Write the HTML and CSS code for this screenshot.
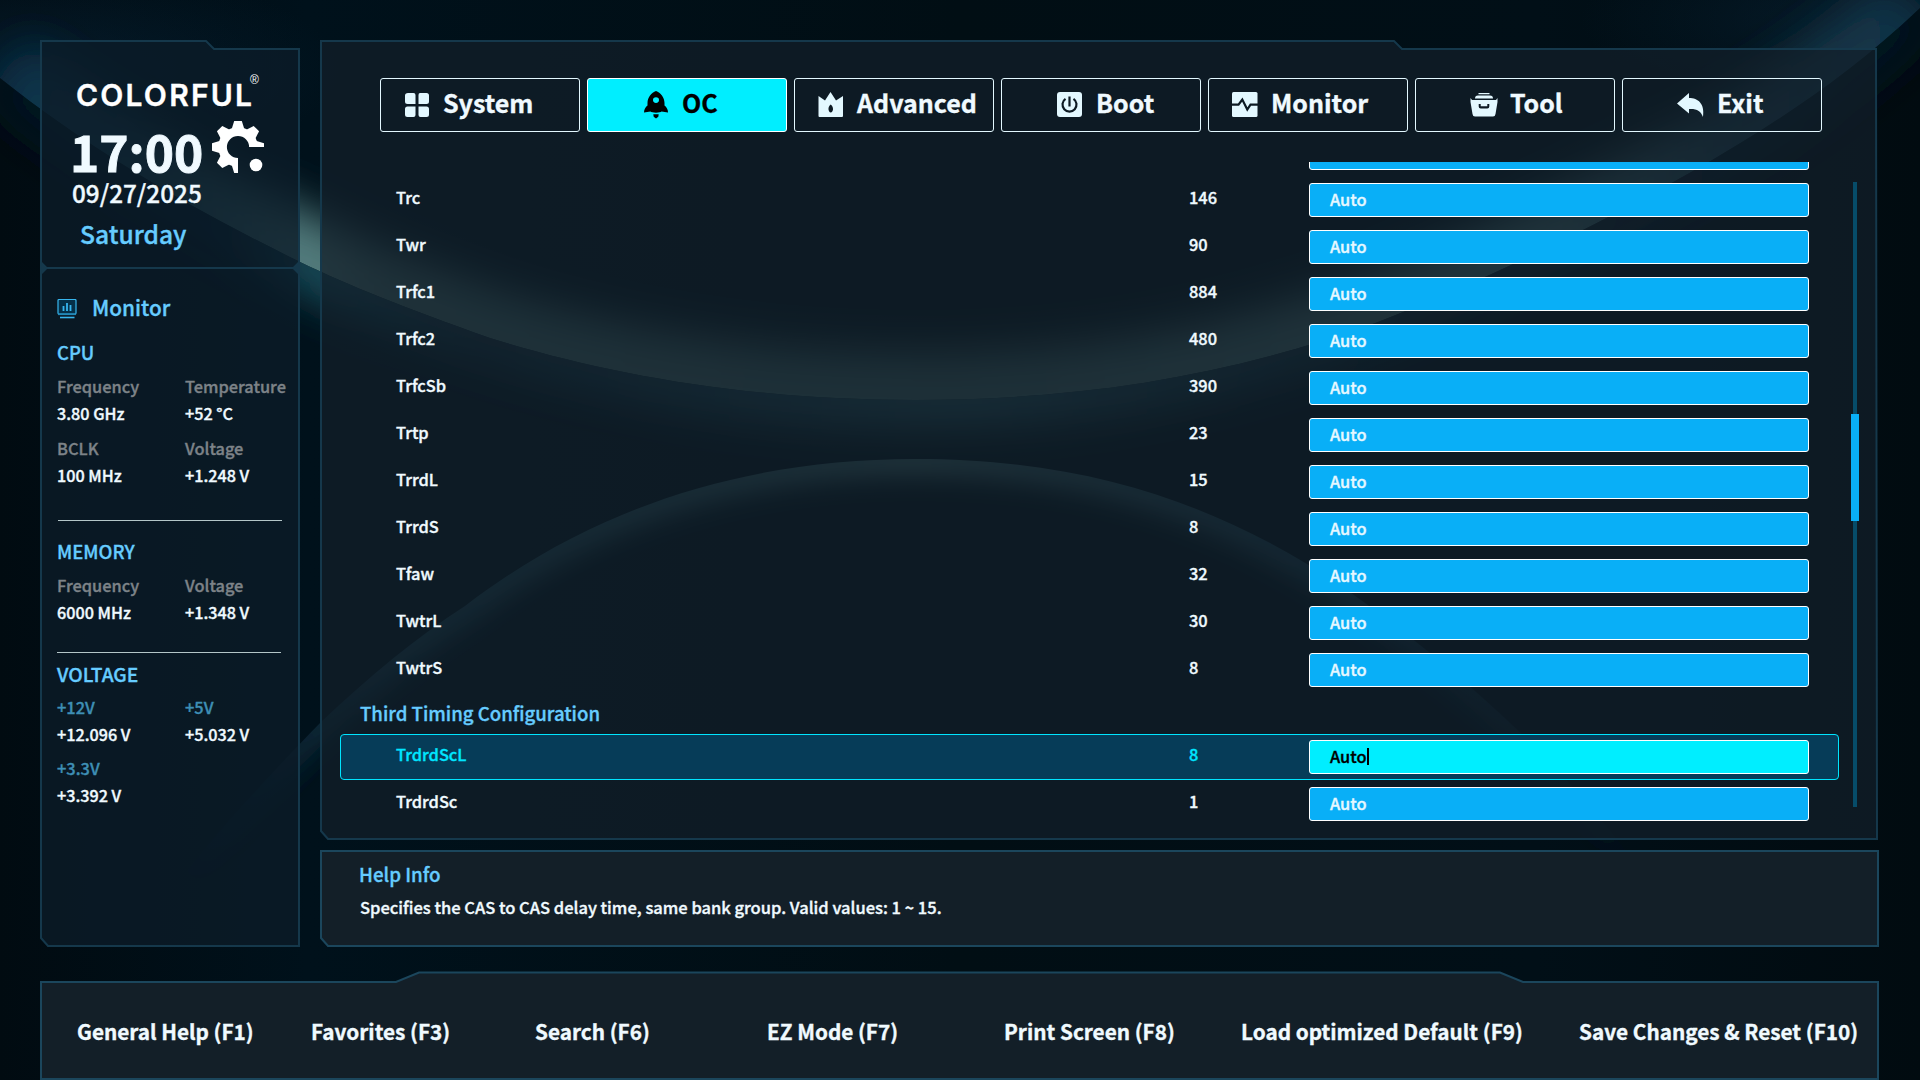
FILE: index.html
```html
<!DOCTYPE html>
<html lang="en">
<head>
  <meta charset="UTF-8" />
  <meta name="viewport" content="width=device-width, initial-scale=1.0"/>
  <title>COLORFUL BIOS - OC</title>
  <link rel="stylesheet" href="styles.css">
</head>
<body>

<!-- background arcs -->
<svg class="backdrop" viewBox="0 0 1920 1080" aria-hidden="true">
  <defs>
    <clipPath id="aboveArc"><path d="M0 0H1920V8C1850 75 1780 120 1709 162C1600 224 1500 274 1378 322C1230 376 1080 400 915 400C740 400 600 372 490 338C400 306 350 286 300 262C190 208 90 150 0 78Z"/></clipPath>
    <clipPath id="belowArc"><path d="M0 78C90 150 190 208 300 262C350 286 400 306 490 338C600 372 740 400 915 400C1080 400 1230 376 1378 322C1500 274 1600 224 1709 162C1780 120 1850 75 1920 8V1080H0Z"/></clipPath>
    <clipPath id="lowerArc"><path d="M150 920C200 850 250 795 321 722C370 676 415 638 465 606C590 510 740 459 915 459C1090 459 1220 505 1340 585C1460 670 1560 760 1640 870L1640 1080H150Z"/></clipPath>
    <linearGradient id="band" gradientUnits="userSpaceOnUse" x1="0" y1="0" x2="1920" y2="0">
      <stop offset="0" stop-color="#0c3049"/>
      <stop offset="0.07" stop-color="#1b4252"/>
      <stop offset="0.16" stop-color="#568080"/>
      <stop offset="0.2" stop-color="#466868"/>
      <stop offset="0.5" stop-color="#426262"/>
      <stop offset="0.8" stop-color="#4c7070"/>
      <stop offset="0.9" stop-color="#1f3f4e"/>
      <stop offset="1" stop-color="#0e3044"/>
    </linearGradient>
    <linearGradient id="under" gradientUnits="userSpaceOnUse" x1="0" y1="0" x2="1920" y2="0">
      <stop offset="0" stop-color="#021420"/>
      <stop offset="0.12" stop-color="#06202e"/>
      <stop offset="0.165" stop-color="#1c5563"/>
      <stop offset="0.25" stop-color="#12303f"/>
      <stop offset="0.5" stop-color="#2c5c66"/>
      <stop offset="0.75" stop-color="#0c2533"/>
      <stop offset="1" stop-color="#021622"/>
    </linearGradient>
    <linearGradient id="lower" gradientUnits="userSpaceOnUse" x1="180" y1="0" x2="1640" y2="0">
      <stop offset="0" stop-color="#0a2a40" stop-opacity="0"/>
      <stop offset="0.15" stop-color="#183f4e"/>
      <stop offset="0.5" stop-color="#4a6f70"/>
      <stop offset="0.8" stop-color="#1a3b4c"/>
      <stop offset="1" stop-color="#0a2a40" stop-opacity="0"/>
    </linearGradient>
    <linearGradient id="base" x1="0" y1="0" x2="1" y2="0">
      <stop offset="0" stop-color="#010b11"/>
      <stop offset="0.16" stop-color="#00111b"/>
      <stop offset="0.5" stop-color="#010e14"/>
      <stop offset="0.8" stop-color="#010f17"/>
      <stop offset="1" stop-color="#010b10"/>
    </linearGradient>
    <radialGradient id="corner"><stop offset="0" stop-color="#08263c" stop-opacity="0.6"/><stop offset="1" stop-color="#08263c" stop-opacity="0"/></radialGradient>
    <filter id="glow" x="-20%" y="-50%" width="140%" height="200%"><feGaussianBlur stdDeviation="22"/></filter>
    <filter id="soft" x="-20%" y="-50%" width="140%" height="200%"><feGaussianBlur stdDeviation="13"/></filter>
  </defs>
  <rect width="1920" height="1080" fill="url(#base)"/>
  <g clip-path="url(#aboveArc)">
    <ellipse cx="20" cy="70" rx="320" ry="110" fill="url(#corner)"/>
    <ellipse cx="1880" cy="20" rx="300" ry="90" fill="url(#corner)"/>
    <path d="M0 78C90 150 190 208 300 262C350 286 400 306 490 338C600 372 740 400 915 400C1080 400 1230 376 1378 322C1500 274 1600 224 1709 162C1780 120 1850 75 1920 8" fill="none" stroke="url(#band)" stroke-width="94" filter="url(#glow)"/>
  </g>
  <g clip-path="url(#belowArc)">
    <path d="M0 78C90 150 190 208 300 262C350 286 400 306 490 338C600 372 740 400 915 400C1080 400 1230 376 1378 322C1500 274 1600 224 1709 162C1780 120 1850 75 1920 8" fill="none" stroke="url(#under)" stroke-width="50" filter="url(#glow)"/>
  </g>
  <g clip-path="url(#lowerArc)">
    <path d="M150 920C200 850 250 795 321 722C370 676 415 638 465 606C590 510 740 459 915 459C1090 459 1220 505 1340 585C1460 670 1560 760 1640 870" fill="none" stroke="url(#lower)" stroke-width="32" filter="url(#soft)"/>
  </g>
</svg>

<div class="screen">

  <aside class="sidebar">
    <svg class="frame" viewBox="0 0 260 907">
      <path class="frame-fill" d="M1 1H166L174 9H259V906H8L1 898Z"/>
      <path class="frame-line" d="M1 1H166L174 9H259V906H8L1 898ZM1 228H259"/>
      <path class="frame-knot" d="M2 222L8 228L2 234ZM258 222L252 228L258 234Z"/>
    </svg>

    <div class="clock">
      <div class="logo">COLORFUL<span class="reg">®</span></div>
      <div class="time-row">
        <span class="time">17:00</span>
        <svg class="gear" viewBox="0 0 52 52">
          <defs>
            <path id="tooth" d="M-6.6 -17L-3.8 -26H3.8L6.6 -17Z"/>
            <clipPath id="gearClip"><path d="M0 0H52V26H26V52H0Z"/></clipPath>
          </defs>
          <g clip-path="url(#gearClip)">
            <g transform="translate(26 26)">
              <circle r="15.4" fill="none" stroke="#fff" stroke-width="8.6"/>
              <use href="#tooth"/>
              <use href="#tooth" transform="rotate(45)"/>
              <use href="#tooth" transform="rotate(90)"/>
              <use href="#tooth" transform="rotate(180)"/>
              <use href="#tooth" transform="rotate(225)"/>
              <use href="#tooth" transform="rotate(270)"/>
              <use href="#tooth" transform="rotate(315)"/>
            </g>
          </g>
          <circle cx="44" cy="44" r="6.3"/>
        </svg>
      </div>
      <div class="date">09/27/2025</div>
      <div class="day">Saturday</div>
    </div>

    <div class="monitor">
      <div class="monitor-title">
        <svg viewBox="0 0 20 20">
          <rect x="1" y="0.500" width="18" height="14.500" rx="1" fill="#053048" stroke="#37b6ee" stroke-width="1.2"/>
          <path d="M6.500 7V12M10 4V12M13.500 6V12" stroke="#37b6ee" stroke-width="1.8"/>
          <path d="M1 15.300H19" stroke="#2289b8" stroke-width="1.600"/>
          <path d="M3 18.500H17.500" stroke="#37b6ee" stroke-width="1.600"/>
        </svg>
        <span>Monitor</span>
      </div>

      <h3>CPU</h3>
      <div class="stats">
        <div><label>Frequency</label><b>3.80 GHz</b></div>
        <div><label>Temperature</label><b>+52 °C</b></div>
        <div><label>BCLK</label><b>100 MHz</b></div>
        <div><label>Voltage</label><b>+1.248 V</b></div>
      </div>
      <hr class="line-cpu">

      <h3>MEMORY</h3>
      <div class="stats">
        <div><label>Frequency</label><b>6000 MHz</b></div>
        <div><label>Voltage</label><b>+1.348 V</b></div>
      </div>
      <hr class="line-mem">

      <h3 class="volt-title">VOLTAGE</h3>
      <div class="stats volts">
        <div><label>+12V</label><b>+12.096 V</b></div>
        <div><label>+5V</label><b>+5.032 V</b></div>
        <div><label>+3.3V</label><b>+3.392 V</b></div>
      </div>
    </div>
  </aside>

  <main class="main">
    <svg class="frame" viewBox="0 0 1558 800">
      <path class="frame-fill" d="M1 1H1074L1082 9H1556L1557 799H8L1 791Z"/>
      <path class="frame-line" d="M1 1H1074L1082 9H1556L1557 799H8L1 791Z"/>
    </svg>

    <nav>
      <a class="tab">
        <svg viewBox="0 0 26 28"><path d="M4 2H9.500Q11.500 2 11.500 4V13H3.500Q1 13 1 10.500V4.500Q1 2 4 2ZM16 2H22.500Q25 2 25 4.500V10.500Q25 13 22.500 13H14.500V4Q14.500 2 16 2ZM3.500 15.500H11.500V24Q11.500 26 9.500 26H3.500Q1 26 1 23.500V18Q1 15.500 3.500 15.500ZM14.500 15.500H22.500Q25 15.500 25 18V23.500Q25 26 22.500 26H16.500Q14.500 26 14.500 24Z"/></svg>
        <span>System</span>
      </a>
      <a class="tab wide active">
        <svg viewBox="0 0 26 28"><path fill-rule="evenodd" d="M13 0C17.500 1.500 21.500 6.500 21.500 12V14.500C23.500 16 25 18.500 25 21.500L18.500 20.500C17.500 22 8.500 22 7.500 20.500L1 21.500C1 18.500 2.500 16 4.500 14.500V12C4.500 6.500 8.500 1.500 13 0ZM13 6.300A3 2.800 0 1 0 13 11.900A3 2.800 0 1 0 13 6.300ZM10.300 23.300H15.700L15.300 25.800L13 27.500L10.700 25.800Z"/></svg>
        <span>OC</span>
      </a>
      <a class="tab">
        <svg viewBox="0 0 26 28"><path fill-rule="evenodd" d="M0.500 5L7 9.500L12.500 1L18 9.500L25 5V25Q25 26 24 26H1.500Q0.500 26 0.500 25ZM12.700 13.500C11.100 14.500 10.300 16.500 10.500 18.500C10.700 20 11.500 21.300 12.700 21.600C14 21.300 14.800 20 15 18.500C15.200 16.500 14.300 14.500 12.700 13.500Z"/></svg>
        <span>Advanced</span>
      </a>
      <a class="tab wide">
        <svg viewBox="0 0 26 28"><rect x="0" y="1" width="25" height="25" rx="3"/><path class="cut" d="M8.500 7.800A7 7 0 1 0 16.500 7.800M12.500 5.500V15.500"/></svg>
        <span>Boot</span>
      </a>
      <a class="tab">
        <svg viewBox="0 0 26 28"><rect x="0" y="1" width="25.500" height="25" rx="1.500"/><path class="cut" d="M0 13.700H6.500L10.300 8.500L15.300 18.500L18.500 13.700H26"/></svg>
        <span>Monitor</span>
      </a>
      <a class="tab wide">
        <svg viewBox="0 0 26 28"><path fill-rule="evenodd" d="M7.500 2H18.500V3.300H7.500ZM4 7.500Q4 4.500 7 4.500H19Q22 4.500 22 7.500ZM-0.500 7L1 9H25L26.500 7V11L24.500 23Q24.200 25.500 22 25.500H4Q1.800 25.500 1.500 23L-0.500 11ZM7.700 13V15.500Q7.700 17.500 9.700 17.500H16.300Q18.300 17.500 18.300 15.500V13H16.300V15.300H9.700V13Z"/></svg>
        <span>Tool</span>
      </a>
      <a class="tab wide">
        <svg viewBox="0 0 26 28"><path d="M-1 12.500L11 2V7C20 7 27 12.500 25 26C23 20 18.500 17.500 11 18V22.500Z"/></svg>
        <span>Exit</span>
      </a>
    </nav>

    <div class="viewport">
      <div class="list">
        <div class="row"><span></span><span></span><div class="field"></div></div>
        <div class="row"><span>Trc</span><span>146</span><div class="field">Auto</div></div>
        <div class="row"><span>Twr</span><span>90</span><div class="field">Auto</div></div>
        <div class="row"><span>Trfc1</span><span>884</span><div class="field">Auto</div></div>
        <div class="row"><span>Trfc2</span><span>480</span><div class="field">Auto</div></div>
        <div class="row"><span>TrfcSb</span><span>390</span><div class="field">Auto</div></div>
        <div class="row"><span>Trtp</span><span>23</span><div class="field">Auto</div></div>
        <div class="row"><span>TrrdL</span><span>15</span><div class="field">Auto</div></div>
        <div class="row"><span>TrrdS</span><span>8</span><div class="field">Auto</div></div>
        <div class="row"><span>Tfaw</span><span>32</span><div class="field">Auto</div></div>
        <div class="row"><span>TwtrL</span><span>30</span><div class="field">Auto</div></div>
        <div class="row"><span>TwtrS</span><span>8</span><div class="field">Auto</div></div>
        <h2 class="group">Third Timing Configuration</h2>
        <div class="row selected"><span>TrdrdScL</span><span>8</span><div class="field">Auto<i class="caret"></i></div></div>
        <div class="row"><span>TrdrdSc</span><span>1</span><div class="field">Auto</div></div>
      </div>
      <div class="scrollbar"><div class="thumb"></div></div>
    </div>
  </main>

  <section class="help">
    <svg class="frame" viewBox="0 0 1559 97">
      <path class="frame-fill solid" d="M1 1H1558V96H8L1 88Z"/>
      <path class="frame-line bright" d="M1 1H1558V96H8L1 88Z"/>
    </svg>
    <h2>Help Info</h2>
    <p>Specifies the CAS to CAS delay time, same bank group. Valid values: 1 ~ 15.</p>
  </section>

  <footer>
    <svg class="frame" viewBox="0 0 1839 108">
      <path class="frame-fill solid" d="M1 10H356L379 0H1460L1483 10H1838V107H1Z"/>
      <path class="frame-line bright" d="M1 10H356L379 0.500H1460L1483 10H1838V107H1Z"/>
    </svg>
    <span>General Help (F1)</span>
    <span>Favorites (F3)</span>
    <span>Search (F6)</span>
    <span>EZ Mode (F7)</span>
    <span>Print Screen (F8)</span>
    <span>Load optimized Default (F9)</span>
    <span>Save Changes &amp; Reset (F10)</span>
  </footer>

</div>

</body>
</html>
```
FILE: styles.css
```css
* {
  box-sizing: border-box;
}

body {
  margin: 0;
  width: 1920px;
  height: 1080px;
  overflow: hidden;
  position: relative;
  background: #010d13;
  color: #f0faff;
  font-family: "Noto Sans CJK SC", "Noto Sans", sans-serif;
  font-size: 16.4px;
  font-weight: 500;
  -webkit-text-stroke: 0.35px;
}

h2, h3, p {
  margin: 0;
  font-weight: 500;
}

.backdrop {
  position: absolute;
  top: 0;
  left: 0;
  width: 1920px;
  height: 1080px;
}

.screen {
  position: relative;
  display: grid;
  grid-template-columns: 260px 1558px;
  grid-template-rows: 800px 97px 108px;
  column-gap: 20px;
  padding: 40px 0 0 40px;
}

/* panel outlines sit behind the panel content */
.frame {
  position: absolute;
  top: 0;
  left: 0;
  width: 100%;
  height: 100%;
  z-index: -1;
  overflow: visible;
}

.frame-fill {
  fill: rgba(17, 31, 42, 0.75);
}

.frame-fill.solid {
  fill: #131f28;
}

.frame-line {
  fill: none;
  stroke: #15384b;
  stroke-width: 2;
}

.frame-line.bright {
  stroke: #1b465c;
}

.frame-knot {
  fill: #15384b;
}

/* sidebar */
.sidebar {
  position: relative;
  z-index: 0;
  grid-row: 1 / 3;
  height: 907px;
}

.sidebar .frame-fill {
  fill: rgba(11, 28, 40, 0.8);
}

.clock {
  height: 228px;
  padding: 40px 0 0 32px;
}

.logo {
  position: relative;
  width: 190px;
  height: 30px;
  margin-left: 4px;
  font: 600 30px/30px Inter, sans-serif;
  letter-spacing: 2.2px;
  color: #fff;
}

.reg {
  position: absolute;
  left: 174px;
  top: -6px;
  font: 12px/12px "Liberation Sans", sans-serif;
  letter-spacing: 0;
  -webkit-text-stroke: 0;
}

.time-row {
  display: flex;
  gap: 9px;
  height: 67px;
  padding-top: 11px;
}

.time {
  width: 131px;
  margin: 4px 0 0 -2px;
  font-size: 49.6px;
  line-height: 50px;
  font-weight: 700;
  white-space: nowrap;
  -webkit-text-stroke: 0.9px;
}

.gear {
  width: 52px;
  height: 52px;
  margin-left: 2px;
  fill: #fff;
}

.date {
  font-size: 24.3px;
  line-height: 31px;
}

.day {
  margin-top: 7px;
  padding-left: 8px;
  font-size: 24.6px;
  line-height: 36px;
  color: #66ccff;
}

.monitor {
  padding: 24px 0 0 17px;
}

.monitor-title {
  display: flex;
  gap: 15px;
  height: 30px;
  margin-bottom: 17px;
  font-size: 20.8px;
  line-height: 31px;
  color: #66ccff;
}

.monitor-title svg {
  width: 20px;
  height: 20px;
  margin-top: 7px;
}

.monitor h3 {
  font-size: 18.4px;
  line-height: 27px;
  color: #66ccff;
}

.monitor .volt-title {
  font-size: 19.2px;
}

.stats {
  display: grid;
  grid-template-columns: 128px 110px;
  row-gap: 8px;
  margin-top: 7px;
  font-size: 16.2px;
  line-height: 27px;
}

.stats label,
.stats b {
  display: block;
  font-weight: 500;
  white-space: nowrap;
}

.stats label {
  color: #7d8388;
  font-size: 16.4px;
}

.stats.volts {
  row-gap: 7px;
  margin-top: 6px;
}

.volts label {
  color: #3e8fb5;
}

.monitor hr {
  width: 224px;
  height: 1px;
  border: 0;
  background: #b4c6c8;
}

.line-cpu {
  margin: 31px 0 17px 1px;
}

.line-mem {
  margin: 26px 0 8px 0;
}

/* main panel */
.main {
  position: relative;
  z-index: 0;
  padding-top: 38px;
}

nav {
  display: flex;
  gap: 7px;
  padding-left: 60px;
}

.tab {
  display: flex;
  align-items: flex-start;
  gap: 13px;
  width: 200px;
  height: 54px;
  padding-left: 23px;
  border: 1px solid #e3f8ff;
  border-radius: 3px;
  font-size: 25px;
  font-weight: 700;
  line-height: 46px;
}

.tab.wide {
  gap: 13px;
  padding-left: 55px;
}

.tab svg {
  width: 26px;
  height: 28px;
  margin-top: 12px;
  fill: #e3f8ff;
  overflow: visible;
}

.tab .cut {
  fill: none;
  stroke: #0d1a24;
  stroke-width: 2.2;
}

.tab.active {
  background: #00eeff;
  border-color: #fff;
  color: #000;
}

.tab.active svg {
  fill: #000;
}

.viewport {
  display: flex;
  height: 667px;
  margin-top: 30px;
  overflow: hidden;
}

/* scrolled part way through a row */
.list {
  width: 1499px;
  margin: -32px 0 0 20px;
}

.row {
  display: grid;
  grid-template-columns: 793px 120px 500px;
  height: 46px;
  margin-bottom: 1px;
  padding-left: 55px;
  border: 1px solid transparent;
  border-radius: 4px;
  line-height: 38px;
}

.row.selected {
  background: #063c58;
  border-color: #00e5ff;
  color: #00e5ff;
}

.field {
  height: 34px;
  margin-top: 5px;
  padding-left: 20px;
  border: 1px solid #fff;
  border-radius: 3px;
  background: #09aff7;
  color: #e6f8ff;
  line-height: 31px;
}

.selected .field {
  background: #00eeff;
  color: #000;
}

.caret {
  display: inline-block;
  width: 2px;
  height: 17px;
  background: #000;
  vertical-align: -2px;
}

.group {
  height: 40px;
  padding-left: 20px;
  font-size: 18.6px;
  line-height: 38px;
  color: #66ccff;
}

.scrollbar {
  width: 4px;
  height: 625px;
  margin: 20px 0 0 14px;
  background: #064c69;
}

.thumb {
  width: 8px;
  height: 107px;
  margin: 232px 0 0 -2px;
  background: #09aff7;
}

/* help */
.help {
  position: relative;
  z-index: 0;
  grid-column: 2;
  width: 1559px;
  height: 97px;
  margin-top: 10px;
  padding: 10px 0 0 39px;
}

.help h2 {
  font-size: 18.8px;
  line-height: 28px;
  color: #66ccff;
}

.help p {
  margin-top: 5px;
  padding-left: 1px;
  font-size: 16.5px;
  line-height: 28px;
}

/* hot keys */
footer {
  position: relative;
  z-index: 0;
  grid-column: 1 / 3;
  display: grid;
  grid-template-columns: 234px 224px 232px 237px 237px 338px 280px;
  width: 1839px;
  height: 108px;
  margin-top: 35px;
  padding: 44px 0 0 37px;
  font-size: 20.75px;
  font-weight: 700;
  line-height: 30px;
  white-space: nowrap;
}
```
